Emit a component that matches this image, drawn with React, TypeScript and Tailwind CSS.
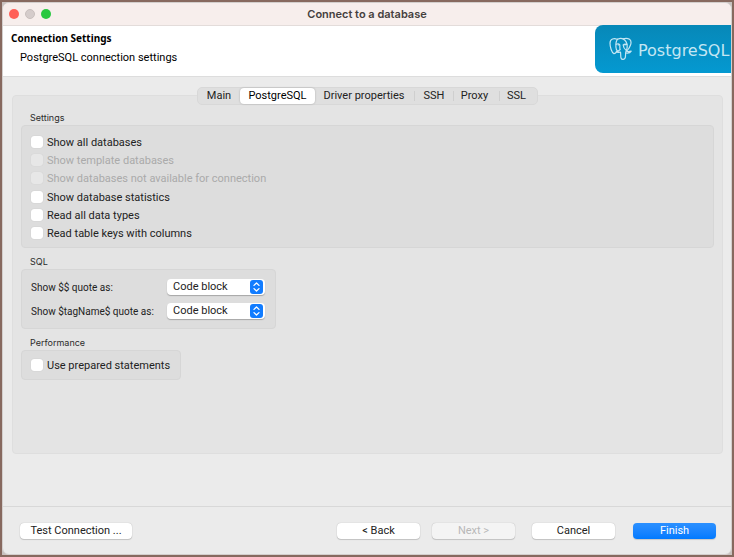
import type { ReactNode } from "react";

type CheckOption = { id: string; label: string; disabled?: boolean };

const settings: CheckOption[] = [
  { id: "all", label: "Show all databases" },
  { id: "template", label: "Show template databases", disabled: true },
  { id: "unavailable", label: "Show databases not available for connection", disabled: true },
  { id: "statistics", label: "Show database statistics" },
  { id: "types", label: "Read all data types" },
  { id: "keys", label: "Read table keys with columns" },
];

function Checkbox({ id, label, disabled }: CheckOption) {
  return (
    <div className="flex h-[18px] items-center gap-1">
      <input
        id={id}
        type="checkbox"
        disabled={disabled}
        className="mb-[2px] size-3 shrink-0 appearance-none rounded-[3px] bg-white shadow-[0_0_1px_rgba(0,0,0,0.2)] checked:bg-[#0a7aff] disabled:bg-[#e7e7e7] disabled:shadow-[0_0_1px_rgba(0,0,0,0.12)]"
      />
      <label htmlFor={id} className={`whitespace-nowrap ${disabled ? "text-[#aaaaaa]" : "text-[#222222]"}`}>
        {label}
      </label>
    </div>
  );
}

function Group({ title, className, children }: { title: string; className: string; children: ReactNode }) {
  return (
    <fieldset className="flex flex-col items-start">
      <legend className="mb-px pl-[9px] font-['Inter','Liberation_Sans',sans-serif] text-[9px] leading-[12px] text-[#2b2b2b]">{title}</legend>
      <div className={`rounded-[4px] border border-[#d6d6d6] bg-[#dddddd] pr-[10px] pl-[9px] ${className}`}>{children}</div>
    </fieldset>
  );
}

function QuoteSelect({ id, label }: { id: string; label: string }) {
  return (
    <div className="flex h-6 items-center justify-between">
      <label htmlFor={id} className="pt-[2px] text-[10px] text-[#222222]">
        {label}
      </label>
      <div className="relative">
        <select
          id={id}
          className="block h-4 w-[98px] appearance-none rounded-[4px] bg-white pl-[6px] text-[11px] leading-[16px] text-[#222222] shadow-[0_1px_1px_rgba(0,0,0,0.25)]"
        >
          <option>Code block</option>
          <option>String</option>
        </select>
        <svg
          viewBox="0 0 13 14"
          aria-hidden="true"
          className="pointer-events-none absolute top-px right-[2px] h-[14px] w-[13px]"
        >
          <rect width="13" height="14" rx="3" fill="#117cff" />
          <path
            d="M4 5.400 6.500 3 9 5.400M4 8.600 6.500 11 9 8.600"
            fill="none"
            stroke="white"
            strokeWidth="1.3"
            strokeLinecap="round"
            strokeLinejoin="round"
          />
        </svg>
      </div>
    </div>
  );
}

function Elephant() {
  return (
    <svg viewBox="0 0 24 24" aria-hidden="true" className="size-6 shrink-0" fill="none" stroke="#c4e6f3" strokeWidth="1.2" strokeLinecap="round" strokeLinejoin="round">
      <path d="M8 2.200C5.300 1 1 1.500 1 6.200c0 3.800 1.700 9.600 3.900 10.400 1.300.4 2.600-1.700 3.300-2.500" />
      <path d="M8.600 2.200C6.900 4.200 6.700 7 6.900 10c.1 2.100.4 3.200 1.600 3.900" />
      <path d="M8.600 2.200c2-.9 4.300-.9 5.600-.2 2.600 1.500 3.900 4.500 4 7.100.1 2-.4 3.400-.9 5" />
      <path d="M14 1.900c2.100-.7 4.600-.8 6.500.4 3.300 2.300.6 8.300-2.800 11.900 1.200.6 3 .4 4.500-.1-.8 1.500-3 2.300-5.300 1.900" />
      <path d="M7.200 7.300c1.300-.8 3.100-.7 3.500.4.400 1.600-.3 3.300.5 4.900M11.200 12.600c-1 .6-2 1.900-3.900 2.300 1.500.8 3.300.2 4.200.1.400 2.200-.1 4.500.6 6.200.7 1.700 3.700 1.600 4.200-.7.400-1.700.1-4.100.6-5.900" />
      <path d="M14.200 8c.9-1 2.400-1.100 3.700-.6M14.200 8c0 2 1.500 4.200 3.200 5.600M9.100 7.800h.6M15.800 7.800h.5" />
    </svg>
  );
}

const tabs = [
  { name: "Main", style: "w-[42px] text-[#222222]" },
  { name: "PostgreSQL", style: "w-[75px] rounded-[4px] bg-white text-black shadow-[0_0_2px_rgba(0,0,0,0.25)]" },
  { name: "Driver properties", style: "w-[99px] pr-px text-[#222222]" },
  { name: "SSH", style: "w-[38px] text-[#222222]", divided: true },
  { name: "Proxy", style: "w-[45px] pr-1 text-[#222222]", divided: true },
  { name: "SSL", style: "w-[37px] pr-1 text-[#222222]", divided: true },
];

const button =
  "h-4 rounded-[4px] bg-white text-center text-[11px] leading-[16px] text-[#222222] shadow-[0_0_1px_rgba(0,0,0,0.3),0_1px_1px_rgba(0,0,0,0.15)]";

export default function App() {
  return (
    <div className="flex min-h-screen flex-col border-2 border-[#87695f] bg-[#c9c2c0] font-['Roboto','Liberation_Sans',sans-serif] text-[11px] leading-[16px]">
      <div className="flex flex-1 flex-col overflow-hidden rounded-[7px] border border-[#d3cfcd] bg-[#ebebeb]">
        <header className="grid h-[23px] grid-cols-[1fr_auto_1fr] items-center border-b border-[#e3dcda] bg-[#f7eeec]">
          <div className="flex gap-[6px] pl-[6px]">
            <button type="button" aria-label="Close" className="size-[10px] rounded-full bg-[#ff5f57]" />
            <button type="button" aria-label="Minimize" className="size-[10px] rounded-full border border-[#c8bfbd] bg-[#d5cccb]" />
            <button type="button" aria-label="Zoom" className="size-[10px] rounded-full bg-[#28c840]" />
          </div>
          <h1 className="font-['Inter','Liberation_Sans',sans-serif] font-semibold text-[#453f3e]">Connect to a database</h1>
        </header>

        <section className="flex h-[51px] justify-between border-b border-[#dddddd] bg-white">
          <div className="pt-[3px] pl-2 text-black">
            <h2 className="font-['Noto_Sans','Open_Sans',sans-serif] text-[10px] leading-[18px] font-bold">Connection Settings</h2>
            <p className="pt-[3px] pl-[9px] leading-[16px]">PostgreSQL connection settings</p>
          </div>
          <div className="-mt-px flex h-12 w-[136px] items-center gap-[5px] overflow-hidden rounded-l-[8px] bg-linear-to-b from-[#0788b8] to-[#0499d1] pl-[14px]">
            <Elephant />
            <span className="pt-[4px] font-['DejaVu_Sans',sans-serif] text-[16px] leading-[20px] text-[#c4e6f3]">PostgreSQL</span>
          </div>
        </section>

        <main className="flex flex-1 flex-col pt-[10px] pr-2 pb-[52px] pl-[9px]">
          <div role="tablist" className="z-10 mx-auto flex h-[18px] items-center rounded-[5px] border border-[#d8d8d8] bg-[#dfdfdf]">
            {tabs.map((tab) => (
              <div key={tab.name} className="flex items-center">
                {tab.divided && <span className="h-[10px] w-px bg-[#cfcfcf]" />}
                <button
                  type="button"
                  role="tab"
                  aria-selected={tab.name === "PostgreSQL"}
                  className={`h-4 text-center text-[11px] leading-[16px] whitespace-nowrap ${tab.style}`}
                >
                  {tab.name}
                </button>
              </div>
            ))}
          </div>

          <div className="-mt-[10px] flex flex-1 flex-col gap-2 rounded-[4px] border border-[#dedede] bg-[#e4e4e4] px-2 pt-4">
            <Group title="Settings" className="flex h-[123px] w-full flex-col justify-between pt-2 pb-1">
              {settings.map((option) => (
                <Checkbox key={option.id} {...option} />
              ))}
            </Group>
            <Group title="SQL" className="h-[60px] w-[255px] pt-[5px]">
              <QuoteSelect id="quote" label="Show $$ quote as:" />
              <QuoteSelect id="tag-quote" label="Show $tagName$ quote as:" />
            </Group>
            <Group title="Performance" className="h-[30px] w-[160px] pt-[6px]">
              <Checkbox id="prepared" label="Use prepared statements" />
            </Group>
          </div>
        </main>

        <footer className="flex h-[48px] items-center justify-between border-t border-[#d8d8d8] pr-[15px] pl-[17px]">
          <button type="button" className={`${button} w-28`}>Test Connection ...</button>
          <div className="flex">
            <button type="button" className={`${button} w-[83px]`}>&lt; Back</button>
            <button type="button" disabled className={`${button} ml-3 w-[83px] disabled:bg-[#f4f4f4] disabled:text-[#b8b8b8]`}>Next &gt;</button>
            <button type="button" className={`${button} ml-[17px] w-[83px]`}>Cancel</button>
            <button type="button" className="ml-[18px] h-4 w-[83px] rounded-[4px] bg-linear-to-b from-[#2b90ff] to-[#007aff] text-center text-[11px] leading-[16px] text-white shadow-[0_1px_1px_rgba(0,0,0,0.15)]">Finish</button>
          </div>
        </footer>
      </div>
    </div>
  );
}
